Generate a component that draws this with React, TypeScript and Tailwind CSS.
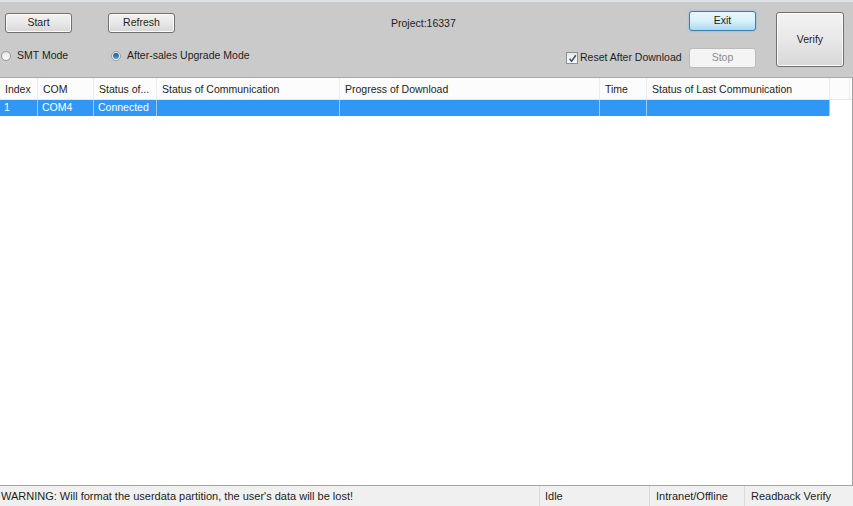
import React from 'react';

const btn =
    'h-[20px] rounded-[3px] border border-[#707070] bg-gradient-to-b from-[#f3f3f3] via-[#e8e8e8] to-[#d7d7d7] text-[10.5px] text-[#1e1e1e] flex items-center justify-center shadow-[inset_0_0_0_1px_#fbfbfb]';

const cols = [
    { label: 'Index', w: 'w-[38px]', cell: '1' },
    { label: 'COM', w: 'w-[56px]', cell: 'COM4' },
    { label: 'Status of...', w: 'w-[63px]', cell: 'Connected' },
    { label: 'Status of Communication', w: 'w-[183px]', cell: '' },
    { label: 'Progress of Download', w: 'w-[260px]', cell: '' },
    { label: 'Time', w: 'w-[47px]', cell: '' },
    { label: 'Status of Last Communication', w: 'w-[183px]', cell: '' },
];

function Radio({ checked, label }: { checked?: boolean; label: string }) {
    return (
        <div className="flex items-center gap-[6px]">
            <span className="w-[10px] h-[10px] rounded-full border border-[#9a9a9a] bg-gradient-to-b from-[#e6e6e6] to-[#fafafa] flex items-center justify-center">
                {checked && <span className="w-[6px] h-[6px] rounded-full bg-gradient-to-b from-[#1c5a8c] to-[#4fa0d8]" />}
            </span>
            <span>{label}</span>
        </div>
    );
}

export default function App() {
    return (
        <div
            className="w-[853px] h-[506px] flex flex-col bg-[#cacaca] text-[10.5px] text-[#1e1e1e] overflow-hidden"
            style={{ fontFamily: '"Liberation Sans", Arial, sans-serif' }}
        >
            <div className="h-[2px] bg-[#dde2e8]" />
            {/* toolbar */}
            <div className="h-[76px] flex border-b border-[#a9a9a9]">
                <div className="w-[380px] flex flex-col pt-[11px]">
                    <div className="flex gap-[36px] pl-[5px]">
                        <div className={`${btn} w-[67px]`}>Start</div>
                        <div className={`${btn} w-[67px]`}>Refresh</div>
                    </div>
                    <div className="flex pl-[1px] mt-[15px]">
                        <div className="w-[110px]">
                            <Radio label="SMT Mode" />
                        </div>
                        <Radio checked label="After-sales Upgrade Mode" />
                    </div>
                </div>
                <div className="w-[185px] pt-[14px] pl-[11px]">Project:16337</div>
                <div className="w-[124px] flex items-end pb-[11px] pl-[1px]">
                    <div className="flex items-center gap-[2px]">
                        <span className="w-[12px] h-[12px] border border-[#8f8f8f] bg-gradient-to-b from-[#e9e9e9] to-[#fbfbfb] flex items-center justify-center">
                            <svg width="9" height="9" viewBox="0 0 9 9">
                                <path d="M1.5 4.8 L3.6 7.2 L7.8 1.2" fill="none" stroke="#3a4f7a" strokeWidth="1.5" />
                            </svg>
                        </span>
                        <span>Reset After Download</span>
                    </div>
                </div>
                <div className="w-[87px] flex flex-col gap-[17px] pt-[9px]">
                    <div className="w-[67px] h-[20px] rounded-[3px] border border-[#3c7fb1] bg-gradient-to-b from-[#eaf6fd] via-[#d9f0fc] to-[#a7d9f5] flex items-center justify-center shadow-[0_0_2px_#5fb3e8]">
                        Exit
                    </div>
                    <div className="w-[67px] h-[20px] rounded-[3px] border border-[#b9bcbf] bg-[#f4f4f4] text-[#8b8b8b] flex items-center justify-center">
                        Stop
                    </div>
                </div>
                <div className="pt-[10px]">
                    <div className={`${btn} w-[68px] !h-[55px]`}>Verify</div>
                </div>
            </div>
            {/* table */}
            <div className="flex-1 bg-white border-r border-[#a0a0a0] flex flex-col">
                <div className="h-[22px] flex bg-[#fcfcfc] border-b border-[#e6e6e6]">
                    {cols.map((c) => (
                        <div key={c.label} className={`${c.w} border-r border-[#ececec] flex items-center pt-[3px] pl-[5px] whitespace-nowrap`}>
                            {c.label}
                        </div>
                    ))}
                    <div className="w-[20px] border-r border-[#ececec]" />
                </div>
                <div className="h-[16px] flex">
                    {cols.map((c) => (
                        <div
                            key={c.label}
                            className={`${c.w} bg-[#3197f4] border-r border-[#9ccbf6] text-white flex items-center pl-[4px] whitespace-nowrap`}
                        >
                            {c.cell}
                        </div>
                    ))}
                </div>
            </div>
            {/* status bar */}
            <div className="h-[21px] flex items-center bg-[#f0f0f0] border-t border-[#a6a6a6] text-[11px]">
                <div className="w-[540px] pl-[1px] border-r border-[#dadada] h-full flex items-center">
                    WARNING: Will format the userdata partition, the user's data will be lost!
                </div>
                <div className="w-[110px] pl-[5px] border-r border-[#dadada] h-full flex items-center">Idle</div>
                <div className="w-[95px] pl-[6px] border-r border-[#dadada] h-full flex items-center">Intranet/Offline</div>
                <div className="flex-1 pl-[6px] h-full flex items-center">Readback Verify</div>
            </div>
        </div>
    );
}
